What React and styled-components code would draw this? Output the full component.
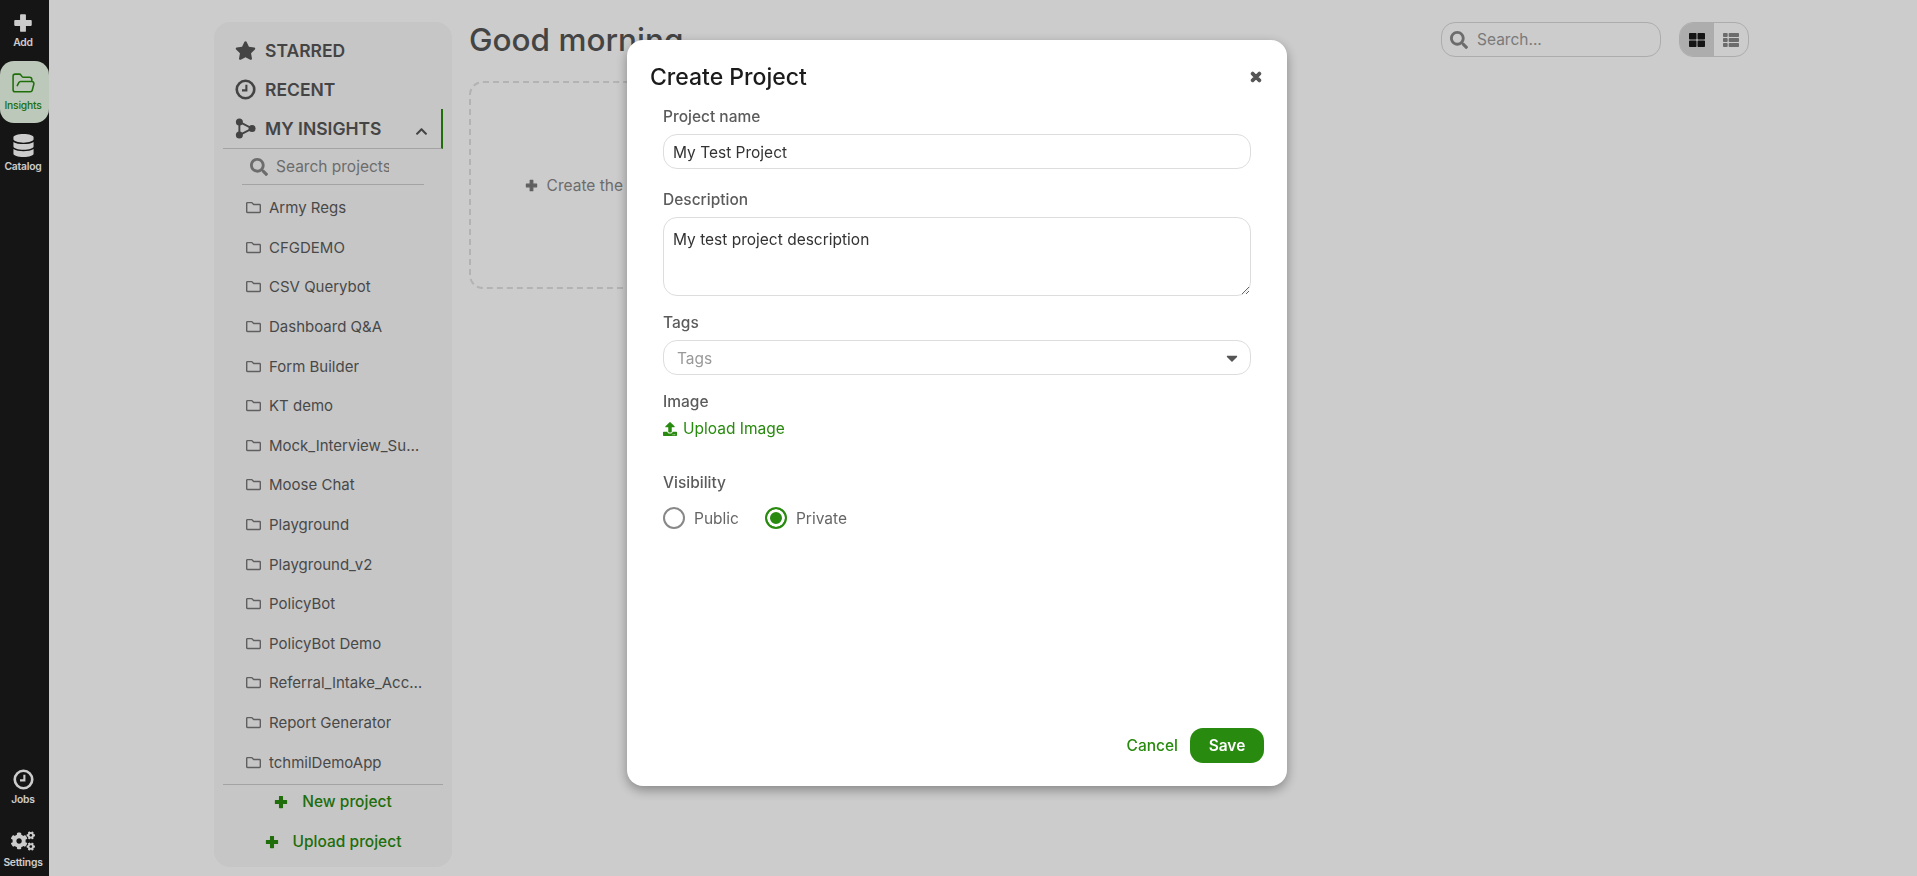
import React from 'react';
import styled, { createGlobalStyle } from 'styled-components';
import {
    FaDatabase, FaCogs, FaStar, FaChevronUp, FaSearch, FaRegFolder,
    FaThLarge, FaThList, FaTimes, FaCaretDown, FaUpload,
} from 'react-icons/fa';
import { FolderOpen } from 'lucide-react';

const GREEN = '#288a0e';

const projects = [
    'Army Regs', 'CFGDEMO', 'CSV Querybot', 'Dashboard Q&A', 'Form Builder', 'KT demo',
    'Mock_Interview_Summary', 'Moose Chat', 'Playground', 'Playground_v2', 'PolicyBot',
    'PolicyBot Demo', 'Referral_Intake_Accelerator', 'Report Generator', 'tchmilDemoApp',
];

const PlusIcon = () => (
    <svg width="1em" height="1em" viewBox="0 0 24 24" fill="currentColor" stroke="currentColor" strokeWidth="2" strokeLinejoin="round">
        <path d="M9.5 2.5h5v7h7v5h-7v7h-5v-7h-7v-5h7z" />
    </svg>
);

const ClockIcon = () => (
    <svg width="1em" height="1em" viewBox="0 0 24 24" fill="none" stroke="currentColor">
        <circle cx="12" cy="12" r="10" strokeWidth="3" />
        <path d="M13 6.5v6.5H8" strokeWidth="2.4" />
    </svg>
);

const NodesIcon = () => (
    <svg width="1em" height="1em" viewBox="0 0 24 24" fill="currentColor" stroke="none">
        <circle cx="5" cy="4.5" r="4" />
        <circle cx="5" cy="19.5" r="4" />
        <circle cx="19.5" cy="12" r="4" />
        <path d="M5 4.5v15L19.5 12z" fill="none" stroke="currentColor" strokeWidth="2.2" />
    </svg>
);

const GlobalStyle = createGlobalStyle`
    html, body {
        margin: 0;
        height: 100%;
        overflow: hidden;
        background: #fff;
        font-family: Inter, "Open Sans", sans-serif;
    }
    * { box-sizing: border-box; }
`;

const Page = styled.div`
    display: flex;
    height: 100vh;
`;

const Rail = styled.nav`
    width: 49px;
    flex-shrink: 0;
    background: #1b1b1b;
    display: flex;
    flex-direction: column;
    justify-content: space-between;
    padding: 8px 0 6px;
`;

const RailGroup = styled.div`
    display: flex;
    flex-direction: column;
    gap: ${props => props.gap || 0}px;
`;

const RailItem = styled.div`
    height: ${props => props.height || 48}px;
    display: flex;
    flex-direction: column;
    align-items: center;
    justify-content: center;
    gap: 3px;
    padding: 0 3px ${props => props.active ? 2 : 0}px 0;
    font-size: 10.3px;
    font-weight: ${props => props.active ? 500 : 600};
    letter-spacing: -0.2px;
    color: ${props => props.active ? GREEN : '#fff'};
    background: ${props => props.active ? '#ebfbe8' : 'transparent'};
    border-radius: ${props => props.active ? '14px' : '0'};
    svg { font-size: ${props => props.iconSize || 21}px; }
`;

const Main = styled.div`
    flex: 1;
    display: flex;
    gap: 17px;
    padding: 22px 168px 9px 165px;
    min-width: 0;
`;

const Panel = styled.aside`
    width: 238px;
    flex-shrink: 0;
    background: #f8f8f8;
    border-radius: 16px;
    padding: 9px 9px 7px;
    display: flex;
    flex-direction: column;
`;

const NavRow = styled.div`
    height: 39px;
    display: flex;
    align-items: center;
    gap: 9px;
    padding-left: 12px;
    font-size: 17.5px;
    font-weight: 600;
    color: #555;
    svg { font-size: 21px; flex-shrink: 0; }
`;

const ActiveRow = styled(NavRow)`
    height: 40px;
    border-bottom: 1px solid #ccc;
    border-right: 2px solid ${GREEN};
    padding-right: 13px;
`;

const Chevron = styled(FaChevronUp)`
    margin-left: auto;
    margin-top: 6px;
    && { font-size: 13px; }
`;

const PanelSearch = styled.label`
    display: flex;
    align-items: center;
    gap: 8px;
    height: 36px;
    margin: 0 19px;
    padding-left: 8px;
    border-bottom: 1px solid #ccc;
    color: #888;
    svg { font-size: 18px; flex-shrink: 0; }
`;

const PanelSearchInput = styled.input`
    width: 113px;
    border: 0;
    outline: 0;
    padding: 0;
    background: transparent;
    font: 400 15.5px Inter, sans-serif;
    &::placeholder { color: #888; opacity: 1; }
`;

const ProjectList = styled.ul`
    list-style: none;
    margin: 3px 0 0;
    padding: 0 0 2px;
    border-bottom: 1px solid #ccc;
`;

const ProjectItem = styled.li`
    height: 39.6px;
    display: flex;
    align-items: center;
    gap: 8px;
    padding: 0 14px 0 23px;
    font-size: 15px;
    color: #5b5b5b;
    svg { font-size: 15px; flex-shrink: 0; color: #777; }
`;

const ProjectName = styled.span`
    overflow: hidden;
    white-space: nowrap;
    text-overflow: ellipsis;
`;

const PanelActions = styled.div`
    display: flex;
    flex-direction: column;
    gap: 6px;
`;

const PanelAction = styled.div`
    height: 34px;
    display: flex;
    align-items: center;
    justify-content: center;
    gap: 14px;
    font-size: 15.5px;
    font-weight: 500;
    color: ${GREEN};
    svg { font-size: 14px; }
`;

const Content = styled.main`
    flex: 1;
    min-width: 0;
    display: flex;
    flex-direction: column;
    gap: 24px;
`;

const TopBar = styled.header`
    display: flex;
    align-items: center;
    height: 35px;
    gap: 18px;
`;

const Greeting = styled.h1`
    margin: 0 auto 0 0;
    font-size: 31.5px;
    font-weight: 500;
    color: #555;
`;

const SearchBox = styled.label`
    width: 220px;
    height: 35px;
    display: flex;
    align-items: center;
    gap: 9px;
    padding-left: 8px;
    border: 1px solid #d8d8d8;
    border-radius: 14px;
    color: #888;
    svg { font-size: 18px; flex-shrink: 0; }
`;

const SearchInput = styled.input`
    flex: 1;
    min-width: 0;
    border: 0;
    outline: 0;
    background: transparent;
    padding: 0;
    font: 400 15.5px Inter, sans-serif;
    &::placeholder { color: #999; opacity: 1; }
`;

const Toggle = styled.div`
    display: flex;
    width: 70px;
    height: 35px;
    border: 1px solid #d8d8d8;
    border-radius: 14px;
    overflow: hidden;
`;

const ToggleButton = styled.div`
    flex: 1;
    display: flex;
    align-items: center;
    justify-content: center;
    font-size: 16px;
    color: ${props => props.active ? '#1b1b1b' : '#888'};
    background: ${props => props.active ? '#d9d9d9' : 'transparent'};
`;

const EmptyCard = styled.div`
    width: 298px;
    height: 208px;
    border: 2px dashed #e0e0e0;
    border-radius: 14px;
    display: flex;
    align-items: center;
    justify-content: center;
    gap: 9px;
    font-size: 15.5px;
    color: #888;
    svg { font-size: 13px; color: #777; }
`;

const Overlay = styled.div`
    position: fixed;
    inset: 0;
    background: rgba(0, 0, 0, 0.2);
`;

const Modal = styled.section`
    position: fixed;
    left: 627px;
    top: 40px;
    width: 660px;
    height: 746px;
    background: #fff;
    border-radius: 16px;
    box-shadow: 0 4px 12px rgba(0, 0, 0, 0.35);
    padding: 21px 23px 23px;
    display: flex;
    flex-direction: column;
`;

const ModalHead = styled.div`
    display: flex;
    align-items: center;
    justify-content: space-between;
    height: 32px;
    margin-bottom: 14px;
`;

const ModalTitle = styled.h2`
    margin: 0;
    font-size: 23px;
    font-weight: 500;
    color: #1b1b1b;
`;

const CloseIcon = styled(FaTimes)`
    font-size: 14px;
    color: #555;
    margin: 0 1px 0 0;
    stroke: currentColor;
    stroke-width: 40;
`;

const Form = styled.form`
    flex: 1;
    display: flex;
    flex-direction: column;
    padding: 0 13px;
`;

const Field = styled.div`
    display: flex;
    flex-direction: column;
    margin-bottom: ${props => props.mb || 0}px;
`;

const Label = styled.label`
    font-size: 15.5px;
    font-weight: 500;
    line-height: 20px;
    color: #5b5b5b;
    margin-bottom: 7px;
`;

const TextInput = styled.input`
    height: 35px;
    border: 1px solid #ddd;
    border-radius: 14px;
    outline: 0;
    padding: 1px 9px 0;
    font: 400 15.5px Inter, sans-serif;
    color: #333;
`;

const TextArea = styled.textarea`
    height: 79px;
    border: 1px solid #ddd;
    border-radius: 14px;
    outline: 0;
    padding: 13px 9px;
    font: 400 15.5px/1.2 Inter, sans-serif;
    color: #333;
    display: block;
`;

const Select = styled.div`
    height: 35px;
    border: 1px solid #ddd;
    border-radius: 14px;
    display: flex;
    align-items: center;
    justify-content: space-between;
    padding: 2px 9px 0 13px;
    font-size: 15.5px;
    color: #999;
    svg { font-size: 18px; color: #555; margin-top: -2px; }
`;

const UploadLink = styled.div`
    display: flex;
    align-items: center;
    gap: 6px;
    font-size: 15.5px;
    line-height: 20px;
    color: ${GREEN};
    svg { font-size: 14px; }
`;

const RadioRow = styled.div`
    display: flex;
    align-items: center;
    gap: 26px;
    margin-top: 7px;
`;

const RadioLabel = styled.label`
    display: flex;
    align-items: center;
    gap: 9px;
    font-size: 15.5px;
    color: #666;
`;

const Radio = styled.input`
    appearance: none;
    margin: 0;
    width: 22px;
    height: 22px;
    border-radius: 50%;
    border: 2px solid ${props => props.checked ? GREEN : '#888'};
    background: ${props => props.checked ? GREEN : '#fff'};
    box-shadow: ${props => props.checked ? 'inset 0 0 0 3px #fff' : 'none'};
`;

const ModalFoot = styled.div`
    display: flex;
    align-items: center;
    justify-content: flex-end;
    gap: 12px;
`;

const CancelButton = styled.button`
    border: 0;
    background: none;
    padding: 0;
    font: 500 15.5px Inter, sans-serif;
    color: ${GREEN};
`;

const SaveButton = styled.button`
    width: 74px;
    height: 35px;
    border: 0;
    border-radius: 13px;
    background: ${GREEN};
    color: #fff;
    font: 600 15.5px Inter, sans-serif;
`;

const App = () => (
    <Page>
        <GlobalStyle />
        <Rail>
            <RailGroup gap={8}>
                <RailItem height={45} iconSize={20}><PlusIcon />Add</RailItem>
                <RailItem active height={62}><FolderOpen size={25} strokeWidth={1.5} />Insights</RailItem>
                <RailItem height={44} iconSize={23}><FaDatabase />Catalog</RailItem>
            </RailGroup>
            <RailGroup gap={17}>
                <RailItem height={44}><ClockIcon />Jobs</RailItem>
                <RailItem height={44} iconSize={24}><FaCogs />Settings</RailItem>
            </RailGroup>
        </Rail>
        <Main>
            <Panel>
                <NavRow><FaStar />STARRED</NavRow>
                <NavRow><ClockIcon />RECENT</NavRow>
                <ActiveRow><NodesIcon />MY INSIGHTS<Chevron /></ActiveRow>
                <PanelSearch>
                    <FaSearch />
                    <PanelSearchInput placeholder="Search projects" />
                </PanelSearch>
                <ProjectList>
                    {projects.map(name => (
                        <ProjectItem key={name}><FaRegFolder /><ProjectName>{name}</ProjectName></ProjectItem>
                    ))}
                </ProjectList>
                <PanelActions>
                    <PanelAction><PlusIcon />New project</PanelAction>
                    <PanelAction><PlusIcon />Upload project</PanelAction>
                </PanelActions>
            </Panel>
            <Content>
                <TopBar>
                    <Greeting>Good morning</Greeting>
                    <SearchBox><FaSearch /><SearchInput placeholder="Search..." /></SearchBox>
                    <Toggle>
                        <ToggleButton active><FaThLarge /></ToggleButton>
                        <ToggleButton><FaThList /></ToggleButton>
                    </Toggle>
                </TopBar>
                <EmptyCard><PlusIcon />Create the first project</EmptyCard>
            </Content>
        </Main>
        <Overlay />
        <Modal>
            <ModalHead>
                <ModalTitle>Create Project</ModalTitle>
                <CloseIcon />
            </ModalHead>
            <Form>
                <Field mb={21}>
                    <Label>Project name</Label>
                    <TextInput value="My Test Project" readOnly />
                </Field>
                <Field mb={17}>
                    <Label>Description</Label>
                    <TextArea value="My test project description" readOnly />
                </Field>
                <Field mb={17}>
                    <Label>Tags</Label>
                    <Select>Tags<FaCaretDown /></Select>
                </Field>
                <Field mb={34}>
                    <Label>Image</Label>
                    <UploadLink><FaUpload />Upload Image</UploadLink>
                </Field>
                <Field>
                    <Label>Visibility</Label>
                    <RadioRow>
                        <RadioLabel><Radio type="radio" name="visibility" checked={false} readOnly />Public</RadioLabel>
                        <RadioLabel><Radio type="radio" name="visibility" checked readOnly />Private</RadioLabel>
                    </RadioRow>
                </Field>
            </Form>
            <ModalFoot>
                <CancelButton type="button">Cancel</CancelButton>
                <SaveButton type="button">Save</SaveButton>
            </ModalFoot>
        </Modal>
    </Page>
);

export default App;
